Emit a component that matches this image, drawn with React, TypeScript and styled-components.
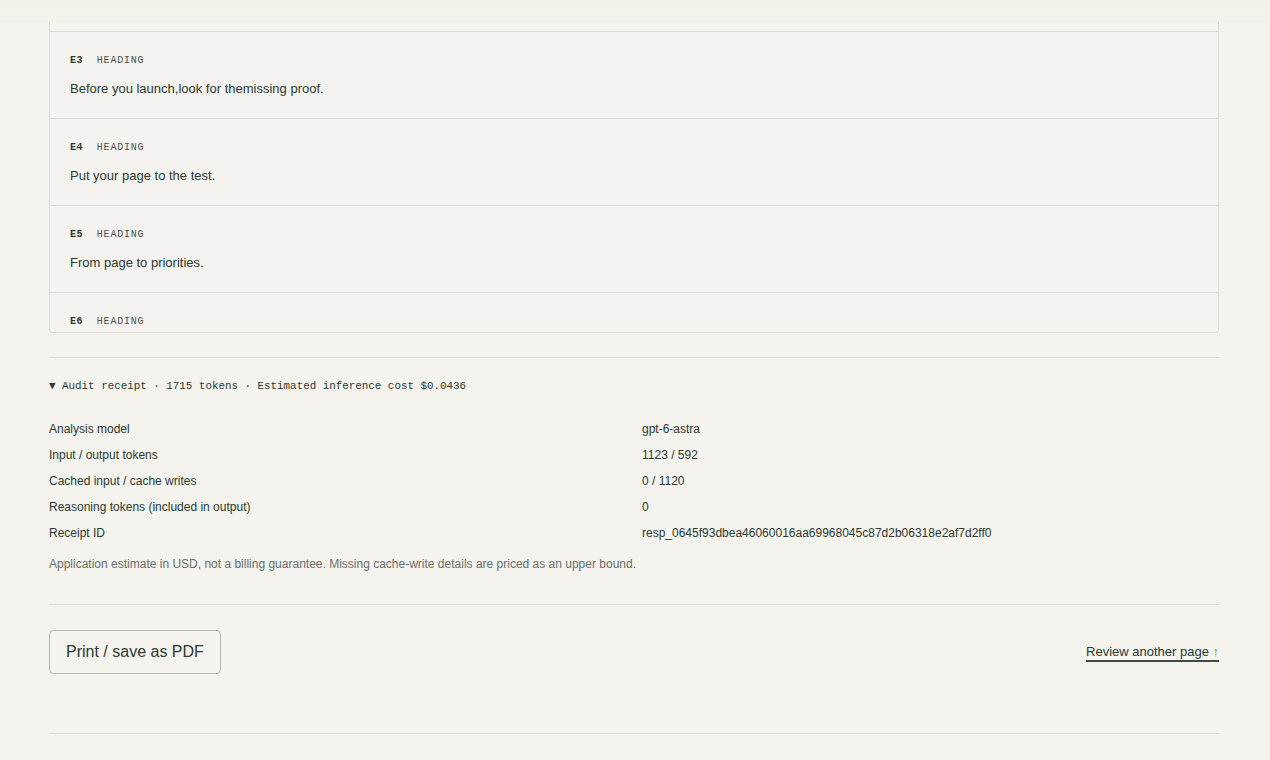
import { useEffect, useRef } from 'react';
import styled, { createGlobalStyle } from 'styled-components';

const GlobalStyle = createGlobalStyle`
  html, body {
    margin: 0;
    padding: 0;
    background: #f4f3ee;
    font-family: "Liberation Sans", Arial, sans-serif;
    color: #2c3a31;
  }
`;

const Page = styled.div`
  width: 1170px;
  margin-left: 49px;
`;

const TopFade = styled.div`
  height: 22px;
  background: linear-gradient(#f2f1e7, #f3f2ec);
`;

const ElementList = styled.div`
  height: 310px;
  overflow-y: auto;
  scrollbar-width: none;
  border: 1px solid #dcdbd4;
  border-top: none;
  border-radius: 0 0 4px 4px;
  background: #f4f3ef;
  &::-webkit-scrollbar {
    display: none;
  }
`;

const ElementRow = styled.div`
  padding: 23px 20px 21px;
  border-bottom: 1px solid #dcdbd4;
`;

const RowLabel = styled.div`
  display: flex;
  gap: 14px;
  font-family: "Liberation Mono", "Courier New", monospace;
  font-size: 10px;
  line-height: 12px;
  margin-bottom: 14px;
`;

const RowId = styled.span`
  font-weight: 700;
  color: #2c3a31;
  letter-spacing: 0.4px;
`;

const RowKind = styled.span`
  color: #4b524d;
  letter-spacing: 0.8px;
`;

const RowText = styled.div`
  font-size: 13px;
  line-height: 16px;
  color: #2c3a31;
`;

const Divider = styled.hr`
  border: none;
  border-top: 1px solid #dcdbd4;
  margin: 0;
`;

const Spacer = styled.div`
  height: 24px;
`;

const ReceiptSummary = styled.div`
  font-family: "Liberation Mono", "Courier New", monospace;
  font-size: 10.87px;
  line-height: 14px;
  color: #2c3a31;
  margin: 21px 0 29px;
  white-space: pre;
`;

const ReceiptGrid = styled.div`
  display: grid;
  grid-template-columns: 1fr 1fr;
  column-gap: 16px;
  row-gap: 12px;
  font-size: 12px;
  line-height: 14px;
  color: #2c3a31;
`;

const Note = styled.p`
  font-size: 12px;
  line-height: 14px;
  color: #6b706b;
  margin: 17px 0 33px;
`;

const Actions = styled.div`
  display: flex;
  justify-content: space-between;
  align-items: center;
  padding: 25px 0 59px;
`;

const PrintButton = styled.button`
  font-family: "Liberation Sans", Arial, sans-serif;
  font-size: 16px;
  color: #2c3a31;
  background: transparent;
  border: 1px solid #b7b7b0;
  border-radius: 4px;
  height: 44px;
  padding: 0 16px;
  cursor: pointer;
`;

const ReviewLink = styled.a`
  font-size: 13px;
  line-height: 16px;
  color: #2c3a31;
  text-decoration: none;
  border-bottom: 2px solid #3c4a41;
  margin-top: 2px;
`;

const Arrow = styled.span`
  color: #6b706b;
`;

const elements = [
  { id: 'E1', kind: 'HEADING', text: 'See what your page promises.' },
  { id: 'E2', kind: 'HEADING', text: 'Every claim, checked against the evidence.' },
  { id: 'E3', kind: 'HEADING', text: 'Before you launch,look for themissing proof.' },
  { id: 'E4', kind: 'HEADING', text: 'Put your page to the test.' },
  { id: 'E5', kind: 'HEADING', text: 'From page to priorities.' },
  { id: 'E6', kind: 'HEADING', text: 'Ready when you are.' },
];

const receipt = [
  ['Analysis model', 'gpt-6-astra'],
  ['Input / output tokens', '1123 / 592'],
  ['Cached input / cache writes', '0 / 1120'],
  ['Reasoning tokens (included in output)', '0'],
  ['Receipt ID', 'resp_0645f93dbea46060016aa69968045c87d2b06318e2af7d2ff0'],
];

const App = () => {
  const listRef = useRef<HTMLDivElement>(null);
  const targetRef = useRef<HTMLDivElement>(null);

  useEffect(() => {
    if (listRef.current && targetRef.current) {
      listRef.current.scrollTop = targetRef.current.offsetTop - listRef.current.offsetTop - 10;
    }
  }, []);

  return (
    <>
      <GlobalStyle />
      <TopFade />
      <Page>
        <ElementList ref={listRef}>
          {elements.map(el => (
            <ElementRow key={el.id} ref={el.id === 'E3' ? targetRef : undefined}>
              <RowLabel>
                <RowId>{el.id}</RowId>
                <RowKind>{el.kind}</RowKind>
              </RowLabel>
              <RowText>{el.text}</RowText>
            </ElementRow>
          ))}
        </ElementList>

        <Spacer />
        <Divider />

        <ReceiptSummary>▼ Audit receipt · 1715 tokens · Estimated inference cost $0.0436</ReceiptSummary>

        <ReceiptGrid>
          {receipt.flatMap(([label, value]) => [
            <div key={label}>{label}</div>,
            <div key={label + '-v'}>{value}</div>,
          ])}
        </ReceiptGrid>

        <Note>Application estimate in USD, not a billing guarantee. Missing cache-write details are priced as an upper bound.</Note>

        <Divider />
        <Actions>
          <PrintButton>Print / save as PDF</PrintButton>
          <ReviewLink href="#">
            Review another page <Arrow>↑</Arrow>
          </ReviewLink>
        </Actions>
        <Divider />
      </Page>
    </>
  );
};

export default App;
